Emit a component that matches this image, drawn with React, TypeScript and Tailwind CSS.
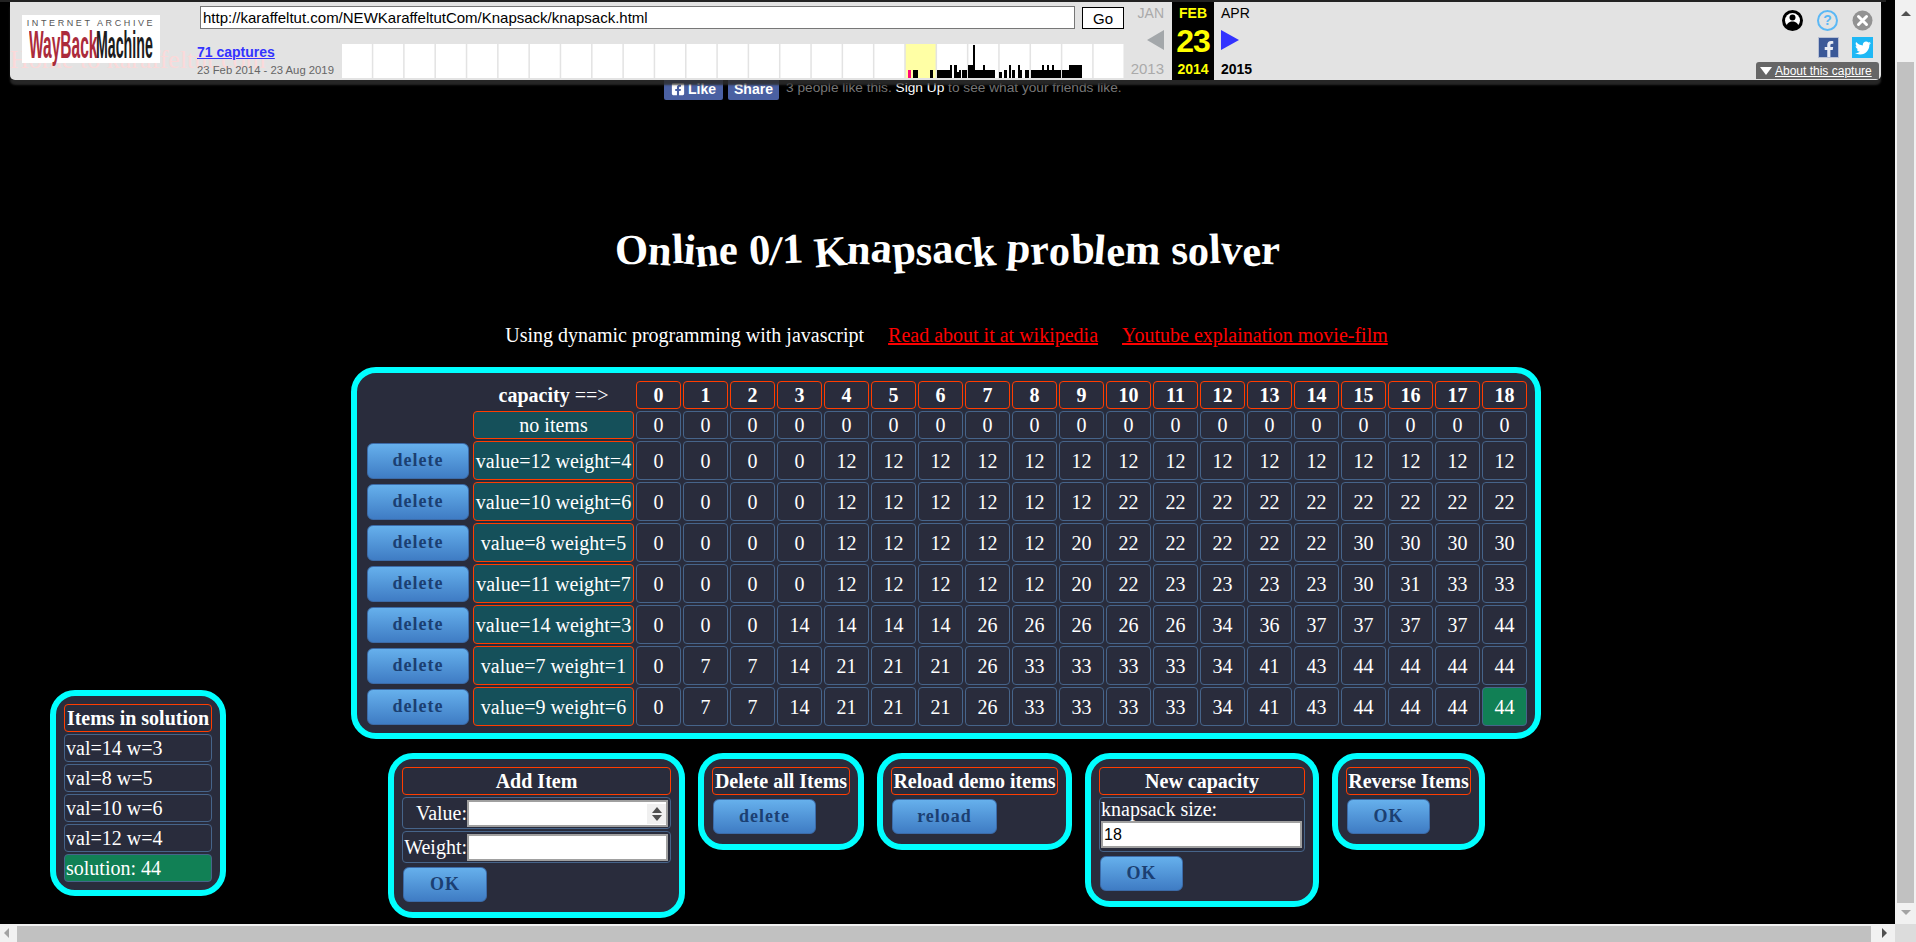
import { FaFacebookF, FaFacebookSquare, FaTwitter } from 'react-icons/fa'

const serif = "font-['Liberation_Serif',serif]"
const sans = "font-['Liberation_Sans',Arial,sans-serif]"

const capacities = Array.from({ length: 19 }, (_, i) => i)

const items = [
  { label: 'value=12 weight=4', cells: [0, 0, 0, 0, 12, 12, 12, 12, 12, 12, 12, 12, 12, 12, 12, 12, 12, 12, 12] },
  { label: 'value=10 weight=6', cells: [0, 0, 0, 0, 12, 12, 12, 12, 12, 12, 22, 22, 22, 22, 22, 22, 22, 22, 22] },
  { label: 'value=8 weight=5', cells: [0, 0, 0, 0, 12, 12, 12, 12, 12, 20, 22, 22, 22, 22, 22, 30, 30, 30, 30] },
  { label: 'value=11 weight=7', cells: [0, 0, 0, 0, 12, 12, 12, 12, 12, 20, 22, 23, 23, 23, 23, 30, 31, 33, 33] },
  { label: 'value=14 weight=3', cells: [0, 0, 0, 14, 14, 14, 14, 26, 26, 26, 26, 26, 34, 36, 37, 37, 37, 37, 44] },
  { label: 'value=7 weight=1', cells: [0, 7, 7, 14, 21, 21, 21, 26, 33, 33, 33, 33, 34, 41, 43, 44, 44, 44, 44] },
  { label: 'value=9 weight=6', cells: [0, 7, 7, 14, 21, 21, 21, 26, 33, 33, 33, 33, 34, 41, 43, 44, 44, 44, 44] },
]

const solution = ['val=14 w=3', 'val=8 w=5', 'val=10 w=6', 'val=12 w=4']

// capture histogram: x, width, height
const bars = [
  [913, 5, 8], [930, 3, 8], [937, 13, 8], [950, 2, 13], [954, 3, 13], [957, 2, 6], [959, 2, 8], [962, 5, 8],
  [968, 5, 13], [973, 2, 33], [975, 8, 8], [983, 2, 13], [985, 10, 8], [999, 3, 6], [1004, 3, 8], [1009, 2, 13],
  [1012, 3, 8], [1018, 2, 13], [1020, 2, 8], [1025, 4, 8], [1031, 11, 8], [1042, 2, 13], [1044, 3, 8], [1047, 2, 13],
  [1049, 3, 8], [1052, 2, 13], [1054, 7, 8], [1062, 7, 8], [1069, 13, 13],
]

const wobble = [
  'rotate-[-4deg]', 'rotate-[3deg] translate-y-[1px]', 'rotate-[-2deg] translate-y-[-1px]', 'rotate-[5deg]',
  'rotate-[-5deg] translate-y-[2px]', 'rotate-[2deg]', 'rotate-[4deg] translate-y-[-2px]',
]

function Panel({ className, children }: { className: string; children: React.ReactNode }) {
  return (
    <div className={`border-[6px] border-[#00ffff] rounded-[25px] bg-[#292c3c] ${className}`}>{children}</div>
  )
}

function Heading({ children }: { children: React.ReactNode }) {
  return (
    <div className="h-[28px] border border-[#ff3d00] rounded-[4px] text-center text-[20px] leading-[26px] font-bold text-white whitespace-nowrap">
      {children}
    </div>
  )
}

function BlueButton({ label, className }: { label: string; className: string }) {
  return (
    <button
      className={`${className} h-[35px] rounded-[6px] border border-[#3c6ba8] bg-gradient-to-b from-[#66b0ec] to-[#3f7cc4] text-[18px] font-bold tracking-[1px] text-[#1b3f72] ${serif}`}
    >
      {label}
    </button>
  )
}

function Cell({ value, green }: { value: number; green?: boolean }) {
  return (
    <div
      className={`flex items-center justify-center rounded-[4px] border border-[#46648a] text-[20px] text-white ${
        green ? 'bg-[#118055]' : ''
      }`}
    >
      {value}
    </div>
  )
}

function KnapsackTable() {
  return (
    <Panel className="w-[1190px] pl-[10px] pr-[8px] pt-[8px] pb-[7px]">
      <div className="grid grid-cols-[104px_161px_repeat(19,45px)] grid-rows-[28px_28px_repeat(7,39px)] gap-[2px]">
        <div />
        <div className="text-center text-[20px] leading-[28px] font-bold text-white">
          capacity <span className="font-normal">==&gt;</span>
        </div>
        {capacities.map((c) => (
          <div
            key={c}
            className="flex items-center justify-center rounded-[4px] border border-[#ff3d00] text-[20px] font-bold text-white"
          >
            {c}
          </div>
        ))}
        <div />
        <div className="flex items-center justify-center rounded-[4px] border border-[#ff3d00] bg-[#15505a] text-[20px] text-white">
          no items
        </div>
        {capacities.map((c) => (
          <Cell key={c} value={0} />
        ))}
        {items.map((item, r) => (
          <div key={item.label} className="contents">
            <div className="flex items-center">
              <BlueButton label="delete" className="w-[102px] h-[36px]" />
            </div>
            <div className="flex items-center justify-center rounded-[4px] border border-[#ff3d00] bg-[#15505a] text-[20px] text-white whitespace-nowrap">
              {item.label}
            </div>
            {item.cells.map((v, i) => (
              <Cell key={i} value={v} green={r === 6 && i === 18} />
            ))}
          </div>
        ))}
      </div>
    </Panel>
  )
}

function ActionPanels() {
  return (
    <div className="ml-[37px] mt-[14px] flex items-start gap-[13px]">
      <Panel className="w-[297px] px-[8px] pt-[8px] pb-[10px]">
        <Heading>Add Item</Heading>
        <div className="mt-[2px] flex h-[32px] items-center justify-end rounded-[4px] border border-[#46648a] pr-[2px] text-[20px] text-white">
          <span>Value:</span>
          <div className="relative">
            <input className="block h-[27px] w-[201px] border-2 border-[#a0a0a0] bg-white" />
            <div className="absolute right-[2px] top-[4px] flex h-[20px] w-[19px] flex-col items-center justify-center gap-[2px] bg-[#f0f0f0]">
              <span className="h-0 w-0 border-x-[5px] border-b-[6px] border-x-transparent border-b-[#505050]" />
              <span className="h-0 w-0 border-x-[5px] border-t-[6px] border-x-transparent border-t-[#505050]" />
            </div>
          </div>
        </div>
        <div className="mt-[2px] flex h-[32px] items-center justify-end rounded-[4px] border border-[#46648a] pr-[2px] text-[20px] text-white">
          <span>Weight:</span>
          <input className="block h-[27px] w-[201px] border-2 border-[#a0a0a0] bg-white" />
        </div>
        <BlueButton label="OK" className="mt-[4px] ml-[1px] w-[84px]" />
      </Panel>

      <Panel className="w-[166px] px-[8px] pt-[8px] pb-[10px]">
        <Heading>Delete all Items</Heading>
        <BlueButton label="delete" className="mt-[4px] ml-[1px] w-[103px]" />
      </Panel>

      <Panel className="w-[195px] px-[8px] pt-[8px] pb-[10px]">
        <Heading>Reload demo items</Heading>
        <BlueButton label="reload" className="mt-[4px] ml-[1px] w-[105px]" />
      </Panel>

      <Panel className="w-[234px] px-[8px] pt-[8px] pb-[10px]">
        <Heading>New capacity</Heading>
        <div className="mt-[2px] h-[55px] rounded-[4px] border border-[#46648a] px-[1px] text-[20px] leading-[23px] text-white">
          knapsack size:
          <input
            defaultValue="18"
            className={`block h-[27px] w-[201px] border-2 border-[#a0a0a0] bg-white pl-[1px] text-[16px] text-black ${sans}`}
          />
        </div>
        <BlueButton label="OK" className="mt-[4px] ml-[1px] w-[83px]" />
      </Panel>

      <Panel className="w-[153px] px-[8px] pt-[8px] pb-[10px]">
        <Heading>Reverse Items</Heading>
        <BlueButton label="OK" className="mt-[4px] ml-[1px] w-[83px]" />
      </Panel>
    </div>
  )
}

function SolutionPanel() {
  return (
    <Panel className="mb-[22px] w-[176px] shrink-0 rounded-[22px] px-[8px] pt-[8px] pb-[8px]">
      <Heading>Items in solution</Heading>
      {solution.map((s) => (
        <div
          key={s}
          className="mt-[2px] h-[28px] rounded-[4px] border border-[#46648a] pl-[1px] text-[20px] leading-[26px] text-white"
        >
          {s}
        </div>
      ))}
      <div className="mt-[2px] h-[28px] rounded-[4px] border border-[#46648a] bg-[#118055] pl-[1px] text-[20px] leading-[26px] text-white">
        solution: 44
      </div>
    </Panel>
  )
}

function WaybackLogo() {
  return (
    <div className="relative h-[48px] w-[138px] shrink-0 bg-white text-center">
      <div className={`pt-[3px] text-[9px] leading-[10px] tracking-[2.6px] text-[#555] ${sans}`}>INTERNET ARCHIVE</div>
      <div className={`flex h-[33px] items-center pl-[7px] font-bold text-[33px] leading-[33px] ${sans}`}>
        <span className="w-[67px] shrink-0 origin-left scale-x-[0.47] scale-y-[1.2] text-left text-[#ab2b3b]">WayBack</span>
        <span className="w-[58px] shrink-0 origin-left scale-x-[0.43] scale-y-[1.2] text-left text-[#1c1c1c]">Machine</span>
      </div>
    </div>
  )
}

function CaptureGraph() {
  return (
    <svg width="783" height="34" viewBox="341 44 783 34" className="block shrink-0">
      {Array.from({ length: 25 }, (_, i) => (
        <rect
          key={i}
          x={341 + i * 31.32 + 1}
          y={44}
          width={29.8}
          height={34}
          fill={i === 18 ? '#ffffa5' : '#ffffff'}
        />
      ))}
      <rect x={908} y={70} width={3} height={8} fill="#ff0a7a" />
      {bars.map(([x, w, h]) => (
        <rect key={x} x={x} y={78 - h} width={w} height={h} fill="#000" />
      ))}
    </svg>
  )
}

function WaybackToolbar() {
  return (
    <div className="absolute left-0 top-0 z-10 w-[1886px] border-t-2 border-[#222] pl-[10px] pr-[5px]">
      <div className="relative flex h-[78px] rounded-b-[5px] bg-[#e3e3e3] shadow-[0_5px_2px_rgba(45,45,45,0.85)]">
        <span className={`absolute left-0 top-[45px] whitespace-nowrap text-[26px] leading-[26px] text-[#fbd9d9] ${serif}`}>
          Home to karaffeltut.com
        </span>

        <div className="relative ml-[12px] mt-[13px]">
          <WaybackLogo />
        </div>

        <div className="relative ml-[37px] w-[927px] shrink-0">
          <div className="ml-[3px] mt-[4px] flex items-center">
            <input
              defaultValue="http://karaffeltut.com/NEWKaraffeltutCom/Knapsack/knapsack.html"
              className={`h-[23px] w-[875px] border border-[#777] bg-white pl-[2px] text-[15px] text-black ${sans}`}
            />
            <button className={`ml-[7px] h-[22px] w-[42px] border border-black bg-white text-[15px] text-black ${sans}`}>
              Go
            </button>
          </div>
          <div className="mt-[15px] flex">
            <div className={`w-[144px] shrink-0 ${sans}`}>
              <div className="text-[14px] leading-[17px] font-bold text-[#3333ff] underline">71 captures</div>
              <div className="mt-[3px] text-[11.3px] leading-[13px] text-[#666]">23 Feb 2014 - 23 Aug 2019</div>
            </div>
            <CaptureGraph />
          </div>
        </div>

        <div className={`flex w-[48px] shrink-0 flex-col items-end pr-[8px] text-[#aaa] ${sans}`}>
          <div className="mt-[3px] text-[14px] leading-[16px]">JAN</div>
          <span className="mt-[9px] h-0 w-0 border-y-[10px] border-r-[17px] border-y-transparent border-r-[#a3a7aa]" />
          <div className="mt-[11px] text-[15px] leading-[16px]">2013</div>
        </div>
        <div className={`flex h-[78px] w-[42px] shrink-0 flex-col items-center bg-black font-bold text-[#ffff00] ${sans}`}>
          <div className="mt-[3px] text-[14px] leading-[16px]">FEB</div>
          <div className="mt-[2px] text-[32px] leading-[36px] tracking-[-1px]">23</div>
          <div className="mt-[2px] text-[14px] leading-[16px]">2014</div>
        </div>
        <div className={`flex w-[60px] shrink-0 flex-col items-start pl-[7px] text-black ${sans}`}>
          <div className="mt-[3px] text-[14px] leading-[16px]">APR</div>
          <span className="mt-[9px] h-0 w-0 border-y-[10px] border-l-[18px] border-y-transparent border-l-[#3333ff]" />
          <div className="mt-[11px] text-[14px] leading-[16px] font-bold">2015</div>
        </div>

        <div className="ml-auto flex flex-col items-end pr-[2px]">
          <div className="mr-[6px] mt-[8px] flex items-center gap-[14px]">
            <svg width="21" height="21" viewBox="0 0 21 21">
              <circle cx="10.5" cy="10.5" r="10.5" fill="#000" />
              <circle cx="10.5" cy="10.5" r="7.5" fill="#fff" />
              <circle cx="10.5" cy="7.5" r="3" fill="#000" />
              <path d="M4 17c1-4 3.500-5.500 6.500-5.500s5.500 1.500 6.500 5.500c-3.500 3-9.500 3-13 0z" fill="#000" />
            </svg>
            <span className={`flex h-[21px] w-[21px] items-center justify-center rounded-full border-[2px] border-[#5bb8f5] text-[14px] font-bold text-[#5bb8f5] ${sans}`}>
              ?
            </span>
            <svg width="21" height="21" viewBox="0 0 21 21">
              <circle cx="10.500" cy="10.500" r="10" fill="#929292" />
              <path d="M6.500 6.500l8 8M14.500 6.500l-8 8" stroke="#fff" strokeWidth="3" strokeLinecap="round" />
            </svg>
          </div>
          <div className="mr-[6px] mt-[6px] flex gap-[13px]">
            <span className="flex h-[21px] w-[21px] items-end justify-center border border-[#b8c0d4] bg-[#3b5998] text-[#e8ecf4]">
              <FaFacebookF size={16} />
            </span>
            <span className="flex h-[21px] w-[21px] items-center justify-center bg-[#1fb8f5] text-white">
              <FaTwitter size={16} />
            </span>
          </div>
          <div className={`mt-[4px] flex h-[17px] w-[123px] items-center gap-[3px] rounded-t-[3px] bg-[#666] pl-[4px] text-[12px] text-white ${sans}`}>
            <span className="h-0 w-0 border-x-[6px] border-t-[8px] border-x-transparent border-t-white" />
            <span className="underline">About this capture</span>
          </div>
        </div>
      </div>
    </div>
  )
}

function FacebookRow() {
  return (
    <div className={`ml-[664px] flex h-[24px] items-center ${sans}`}>
      <span className="flex h-[24px] w-[59px] items-end justify-center gap-[3px] rounded-[2px] bg-[#4a60a2] pb-[3px] text-[14px] leading-[16px] font-bold text-white">
        <FaFacebookSquare size={14} className="mb-[1px]" />
        Like
      </span>
      <span className="ml-[5px] flex h-[24px] w-[51px] items-end justify-center rounded-[2px] bg-[#4a60a2] pb-[3px] text-[14px] leading-[16px] font-bold text-white">
        Share
      </span>
      <span className="ml-[7px] whitespace-nowrap text-[13.7px] text-[#777]">
        3 people like this. <span className="text-white">Sign Up</span> to see what your friends like.
      </span>
    </div>
  )
}

function Title() {
  const text = 'Online 0/1 Knapsack problem solver'
  return (
    <h1 className="mt-[125px] h-[50px] text-center text-[42.6px] leading-[50px] font-bold text-white whitespace-pre">
      {text.split('').map((ch, i) => (
        <span key={i} className={`inline-block ${wobble[i % wobble.length]}`}>
          {ch}
        </span>
      ))}
    </h1>
  )
}

function ScrollbarV() {
  return (
    <div className="flex h-full w-[21px] shrink-0 flex-col items-center bg-[#f1f1f1]">
      <span className="mt-[11px] h-0 w-0 border-x-[5px] border-b-[5px] border-x-transparent border-b-[#505050]" />
      <div className="mt-[46px] h-[841px] w-[17px] bg-[#c1c1c1]" />
      <span className="mt-[7px] h-0 w-0 border-x-[5px] border-t-[5px] border-x-transparent border-t-[#a3a3a3]" />
    </div>
  )
}

function ScrollbarH() {
  return (
    <div className="flex h-[18px] shrink-0 items-stretch bg-[#f1f1f1]">
      <div className="flex w-[17px] items-center pl-[4px]">
        <span className="h-0 w-0 border-y-[5px] border-r-[5px] border-y-transparent border-r-[#a3a3a3]" />
      </div>
      <div className="mt-[2px] flex-1 bg-[#c1c1c1]" />
      <div className="flex w-[24px] items-center pl-[11px]">
        <span className="h-0 w-0 border-y-[5px] border-l-[5px] border-y-transparent border-l-[#505050]" />
      </div>
      <div className="w-[21px] bg-[#dcdcdc]" />
    </div>
  )
}

export default function App() {
  return (
    <div className={`relative flex h-screen flex-col overflow-hidden bg-black ${serif}`}>
      <div className="flex min-h-0 flex-1">
        <main className="min-w-0 flex-1 overflow-hidden pt-[76px]">
          <FacebookRow />
          <Title />
          <div className="mr-[2px] mt-[47px] flex h-[26px] items-center justify-center gap-[24px] text-[20px] leading-[26px]">
            <span className="text-white">Using dynamic programming with javascript</span>
            <a className="text-[#ff0000] underline">Read about it at wikipedia</a>
            <a className="text-[#ff0000] underline">Youtube explaination movie-film</a>
          </div>
          <div className="mt-[19px] flex items-end pl-[50px]">
            <SolutionPanel />
            <div className="ml-[125px]">
              <KnapsackTable />
              <ActionPanels />
            </div>
          </div>
        </main>
        <ScrollbarV />
      </div>
      <ScrollbarH />
      <WaybackToolbar />
    </div>
  )
}
